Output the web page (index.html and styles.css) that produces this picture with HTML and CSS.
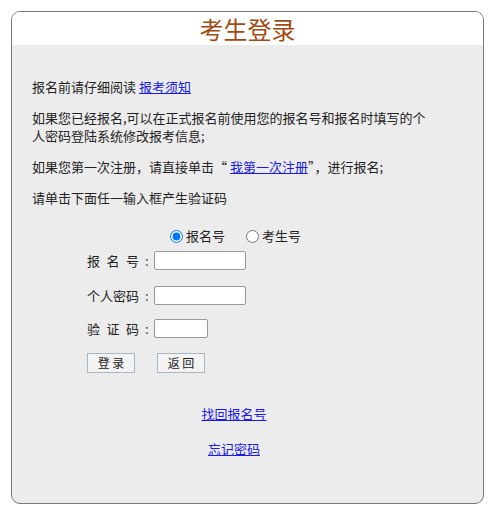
FILE: index.html
```html
<!DOCTYPE html>
<html lang="zh-CN">
<head>
<meta charset="utf-8">
<title>考生登录</title>
<link rel="stylesheet" href="styles.css">
</head>
<body>
<div class="box">
  <div class="head">考生登录</div>
  <div class="content">
    <p class="line">报名前请仔细阅读 <a href="#">报考须知</a></p>
    <p class="line">如果您已经报名,可以在正式报名前使用您的报名号和报名时填写的个人密码登陆系统修改报考信息;</p>
    <p class="line">如果您第一次注册，请直接单击“ <a href="#">我第一次注册</a>”，进行报名;</p>
    <p class="line">请单击下面任一输入框产生验证码</p>

    <div class="radios">
      <label class="radio"><input type="radio" name="t" checked>报名号</label>
      <label class="radio"><input type="radio" name="t">考生号</label>
    </div>

    <div class="form">
      <div class="row r1">
        <span class="lbl">报 名 号</span><span class="colon">:</span><input class="inp" type="text">
      </div>
      <div class="row r2">
        <span class="lbl">个人密码</span><span class="colon">:</span><input class="inp" type="password">
      </div>
      <div class="row r3">
        <span class="lbl">验 证 码</span><span class="colon">:</span><input class="inp short" type="text">
      </div>
      <div class="row btns">
        <button class="btn" type="button">登 录</button>
        <button class="btn" type="button">返 回</button>
      </div>
    </div>

    <div class="links">
      <a class="l1" href="#">找回报名号</a>
      <a class="l2" href="#">忘记密码</a>
    </div>
  </div>
</div>
</body>
</html>
```

FILE: styles.css
```css
html, body {
  margin: 0;
  padding: 0;
  background: #ffffff;
}
body {
  font-family: "Noto Sans CJK SC", "Noto Sans", sans-serif;
  font-size: 13px;
  color: #222;
}
.box {
  margin: 11px 0 0 11px;
  width: 473px;
  height: 493px;
  box-sizing: border-box;
  border: 1px solid #77787c;
  border-radius: 9px;
  background: #ececec;
  overflow: hidden;
}
.head {
  background: #ffffff;
  height: 33px;
  line-height: 33px;
  text-align: center;
  font-size: 24px;
  color: #a34a12;
}
.content {
  padding: 33px 0 0 20px;
  width: 404px;
}
.line {
  margin: 0 0 13px 0;
  line-height: 18px;
}
a {
  color: #1a1aee;
  text-decoration: underline;
}
.radios {
  margin-top: 20px;
  height: 18px;
  display: flex;
  justify-content: flex-start;
  align-items: center;
  gap: 21px;
  padding-left: 138px;
}
.radio {
  display: flex;
  align-items: center;
  line-height: 18px;
}
.radio input {
  width: 13px;
  height: 13px;
  margin: 0 3px 0 0;
}
.form {
  margin-left: 55px;
}
.row {
  display: flex;
  align-items: center;
  height: 19px;
}
.r1 { margin-top: 6px; }
.r2 { margin-top: 16px; }
.r3 { margin-top: 14px; }
.lbl {
  display: inline-block;
  width: 52px;
  text-align: justify;
  text-align-last: justify;
  line-height: 19px;
}
.colon {
  padding: 0 6px;
  width: 3px;
  line-height: 19px;
  color: #444;
}
.inp {
  box-sizing: border-box;
  width: 92px;
  height: 19px;
  margin: 0;
  padding: 0 3px;
  border: 1px solid #9a9a9a;
  border-radius: 2px;
  background: #fff;
  font-size: 12px;
}
.inp.short {
  width: 54px;
}
.btns {
  margin-top: 15px;
  height: 20px;
  gap: 22px;
}
.btn {
  box-sizing: border-box;
  width: 48px;
  height: 20px;
  margin: 0;
  padding: 0;
  border: 1px solid #a9b6c6;
  background: #f3f3f3;
  font-family: "Noto Sans CJK SC", sans-serif;
  font-size: 12px;
  color: #222;
  line-height: 18px;
}
.links {
  margin-top: 32px;
  display: flex;
  flex-direction: column;
  align-items: center;
}
.links a {
  line-height: 18px;
}
.links .l2 {
  margin-top: 17px;
}
```
